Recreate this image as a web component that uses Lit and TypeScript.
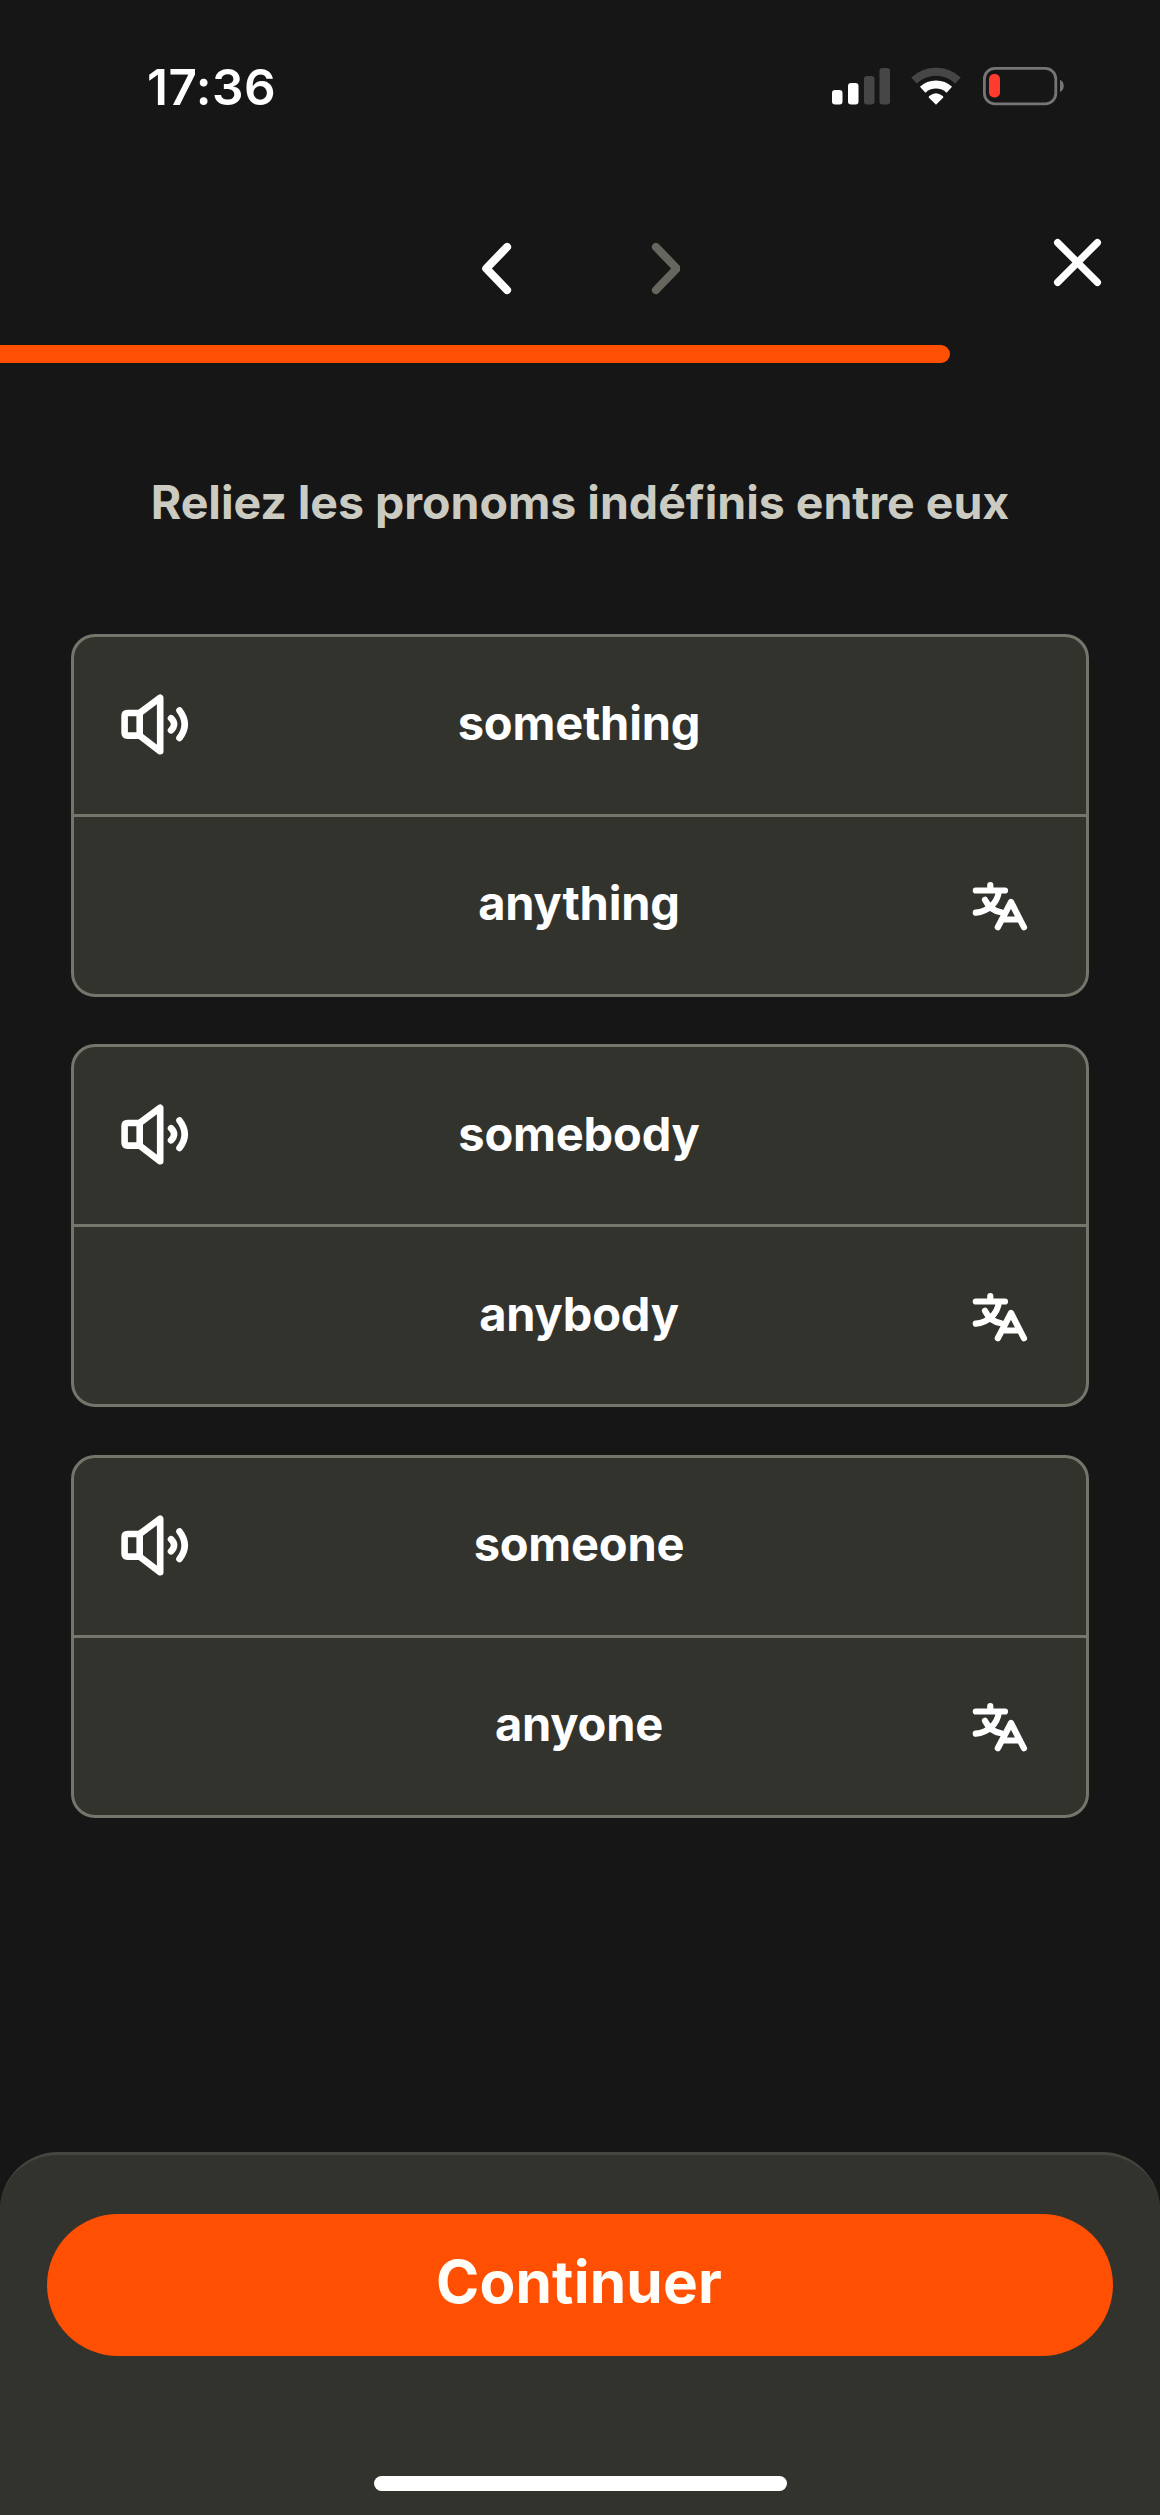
import { LitElement, html, css } from "lit";
import { customElement, property } from "lit/decorators.js";

@customElement("status-bar")
class StatusBar extends LitElement {
  static styles = css`
    :host { display: flex; justify-content: space-between; align-items: flex-start; height: 222px; box-sizing: border-box; padding: 57px 95px 0 147px; }
    .time { font-size: 49.5px; line-height: 61px; font-weight: 600; letter-spacing: 0.5px; color: #fff; }
    .icons { width: 234px; height: 42px; margin-top: 8px; display: block; }
  `;
  render() {
    return html`
      <div class="time">17:36</div>
      <svg class="icons" viewBox="831 65 234 42">
        <g fill="#fff">
          <rect x="832" y="90" width="10.5" height="14.5" rx="3" />
          <rect x="848" y="83" width="10.5" height="21.5" rx="3" />
        </g>
        <g fill="#464646">
          <rect x="864" y="76" width="10.5" height="28.5" rx="3" />
          <rect x="879.5" y="68" width="10.5" height="36.5" rx="3" />
        </g>
        <g fill="none">
          <path d="M914 80.5A32 32 0 0 1 958 80.5" stroke="#464646" stroke-width="8" />
          <path d="M922.7 89.8A19.5 19.5 0 0 1 949.3 89.8" stroke="#fff" stroke-width="8" />
        </g>
        <path d="M936 104.8L928.7 97.6Q928.5 96.5 929.6 95.8Q936 90.8 942.4 95.8Q943.5 96.5 943.3 97.6Z" fill="#fff" />
        <rect x="984.4" y="68.4" width="71.4" height="35.4" rx="10.5" fill="none" stroke="#757575" stroke-width="2.8" />
        <rect x="989" y="74" width="11" height="23.4" rx="5" fill="#ff3b30" />
        <path d="M1060 79.8C1065 82 1065 90 1060 92Z" fill="#757575" />
      </svg>`;
  }
}

@customElement("lesson-nav")
class LessonNav extends LitElement {
  @property({ type: Number }) progress = 0;
  static styles = css`
    :host { display: block; }
    .row { display: grid; grid-template-columns: 1fr 200px 1fr; height: 123px; align-items: start; }
    .steps { grid-column: 2; width: 200px; height: 60px; margin-top: 16px; display: block; }
    .close { justify-self: end; width: 52px; height: 52px; margin: 14px 56px 0 0; display: block; }
    .bar { height: 18.4px; background: #ff4f02; border-radius: 0 9.2px 9.2px 0; }
  `;
  render() {
    return html`
      <div class="row">
        <svg class="steps" viewBox="480 238 200 60" fill="none" stroke-linecap="round" stroke-linejoin="round" stroke-width="8.2">
          <path d="M507 247L486.3 268.5L507 290" stroke="#fff" />
          <path d="M656 247L676.7 268.5L656 290" stroke="#66665e" />
        </svg>
        <svg class="close" viewBox="1052 236 52 52" fill="none" stroke="#fff" stroke-width="7.2" stroke-linecap="round">
          <path d="M1057.6 242.6L1097.4 282.4M1097.4 242.6L1057.6 282.4" />
        </svg>
      </div>
      <div class="bar" style="width:${this.progress}%"></div>`;
  }
}

@customElement("word-card")
class WordCard extends LitElement {
  @property() top = "";
  @property() bottom = "";
  static styles = css`
    :host { display: flex; flex-direction: column; height: 363px; box-sizing: border-box; border: 3px solid #75756c; border-radius: 24px; background: #33332e; }
    .cell { flex: 1; display: grid; grid-template-columns: 150px 1fr 152px; align-items: center; padding-bottom: 3px; }
    .cell + .cell { border-top: 3px solid #75756c; }
    .word { grid-column: 2; text-align: center; color: #fff; font-size: 47px; line-height: 58px; font-weight: 700; letter-spacing: -0.2px; padding-bottom: 1px; }
    .sound { grid-column: 1; grid-row: 1; width: 72px; height: 66px; margin-left: 45px; }
    .translate { grid-column: 3; width: 58px; height: 52px; justify-self: end; margin: 5px 58px 0 0; }
  `;
  render() {
    return html`
      <div class="cell">
        <svg class="sound" viewBox="119 691 72 66" fill="none" stroke="#fff" stroke-width="6.6" stroke-linecap="round" stroke-linejoin="round">
          <path d="M139.7 713H127.5Q124.6 713 124.6 716V732.5Q124.6 735.6 127.5 735.6H139.7Z" />
          <path d="M139.7 713L160.2 697.7V751.3L139.7 735.6" />
          <path d="M171 718.2Q177.2 724.3 171 730.3M179.5 710.5Q190 724.3 179.5 738" />
        </svg>
        <span class="word">${this.top}</span>
      </div>
      <div class="cell">
        <span class="word">${this.bottom}</span>
        <svg class="translate" viewBox="970 880 58 52" fill="none" stroke="#fff" stroke-width="6.2" stroke-linecap="round" stroke-linejoin="round">
          <path d="M975.8 890.5H1005M990.3 885.2V890M998.8 891.5C997.5 903 988 911.5 975.8 912.6M985 899.8C988 906 993 910.8 1001 912.2" />
          <path d="M997.8 927.3L1011 902L1024 927.3M1002 919.5H1020" />
        </svg>
      </div>`;
  }
}

@customElement("app-root")
class AppRoot extends LitElement {
  private pairs = [
    ["something", "anything"],
    ["somebody", "anybody"],
    ["someone", "anyone"],
  ];
  static styles = css`
    :host { display: flex; flex-direction: column; width: 1160px; height: 2515px; overflow: hidden; background: #161616; font-family: Inter, "Liberation Sans", sans-serif; }
    .title { margin: 107px 0 0; text-align: center; color: #cbcbc2; font-size: 46.5px; line-height: 64px; font-weight: 700; letter-spacing: -0.03px; }
    .cards { display: flex; flex-direction: column; gap: 47.5px; padding: 99.6px 71px 0; }
    .sheet { margin-top: auto; height: 363.5px; box-sizing: border-box; border-top: 3px solid #454640; border-radius: 58px 58px 0 0; background: #33332e; padding: 59px 47px 0; display: flex; flex-direction: column; align-items: center; }
    .cta { width: 100%; height: 142px; border: 0; border-radius: 71px; background: #ff4f02; color: #fffdf8; font: 700 58.5px/70px Inter, "Liberation Sans", sans-serif; letter-spacing: 0.2px; padding: 0 2px 5px 0; }
    .home { width: 413px; height: 15.5px; border-radius: 8px; background: #fff; margin-top: 120px; }
  `;
  render() {
    return html`
      <status-bar></status-bar>
      <lesson-nav .progress=${81.9}></lesson-nav>
      <h1 class="title">Reliez les pronoms indéfinis entre eux</h1>
      <div class="cards">
        ${this.pairs.map(([a, b]) => html`<word-card .top=${a} .bottom=${b}></word-card>`)}
      </div>
      <div class="sheet">
        <button class="cta">Continuer</button>
        <div class="home"></div>
      </div>`;
  }
}
